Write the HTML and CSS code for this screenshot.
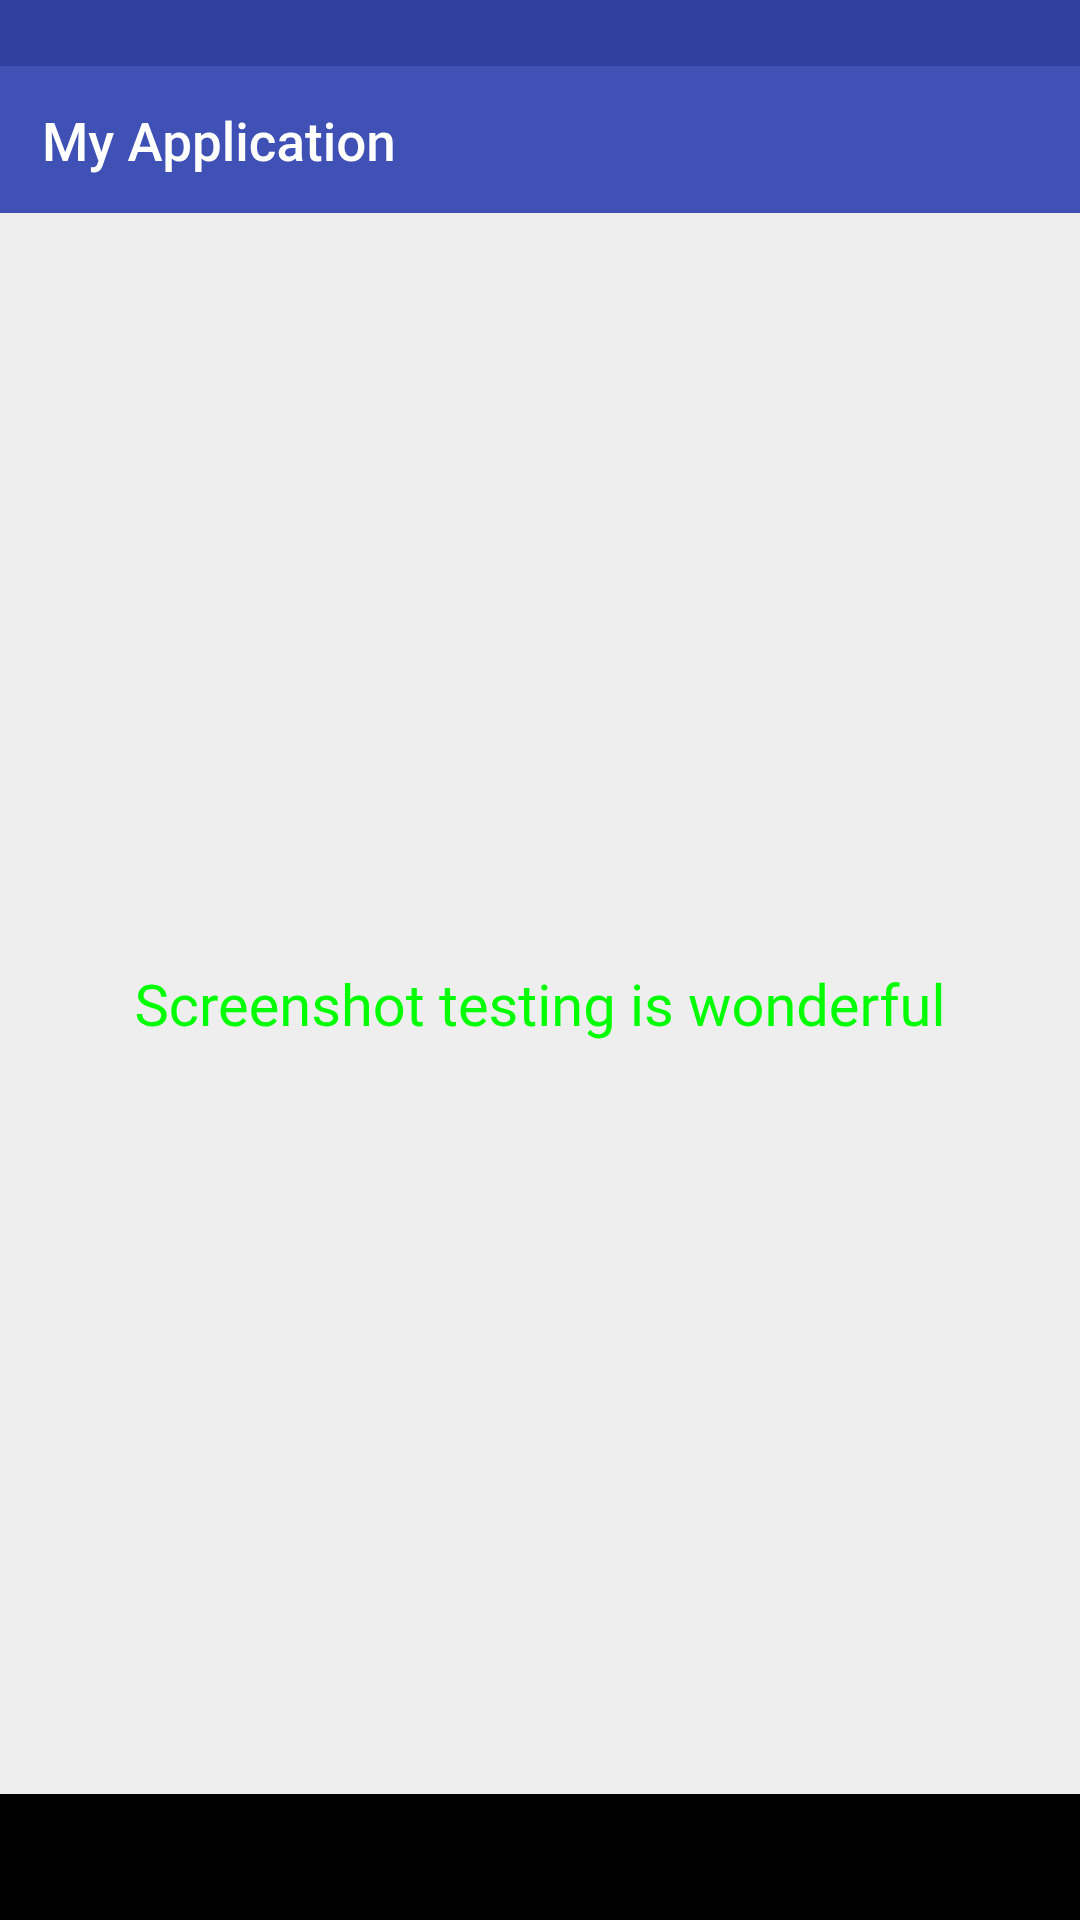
FILE: index.html
```html
<!DOCTYPE html>
<html>
<head>
<meta charset="utf-8">
<link rel="stylesheet" href="styles.css">
</head>
<body>
<div class="screen">
  <div class="status-bar"></div>
  <header class="toolbar"><h1 class="title">My Application</h1></header>
  <main class="content"><p class="message">Screenshot testing is wonderful</p></main>
  <div class="nav-bar"></div>
</div>
</body>
</html>
```
FILE: styles.css
```css
html, body {
  margin: 0;
  padding: 0;
}
body {
  font-family: Roboto, "Noto Sans", sans-serif;
}
.screen {
  width: 1080px;
  height: 1920px;
  display: flex;
  flex-direction: column;
  background: #eeeeee;
}
.status-bar {
  height: 66px;
  background: #303f9f;
  flex: none;
}
.toolbar {
  height: 147px;
  background: #3f51b5;
  flex: none;
  display: flex;
  align-items: center;
  padding-left: 42px;
}
.title {
  margin: 0;
  padding-top: 7px;
  font-size: 53px;
  font-weight: 500;
  color: #ffffff;
  line-height: normal;
}
.content {
  flex: 1;
  display: flex;
  align-items: center;
  justify-content: center;
}
.message {
  margin: 0;
  padding-top: 5px;
  color: #00ff00;
  font-size: 57.75px;
  font-weight: 400;
  line-height: normal;
}
.nav-bar {
  height: 126px;
  background: #000000;
  flex: none;
}
```
